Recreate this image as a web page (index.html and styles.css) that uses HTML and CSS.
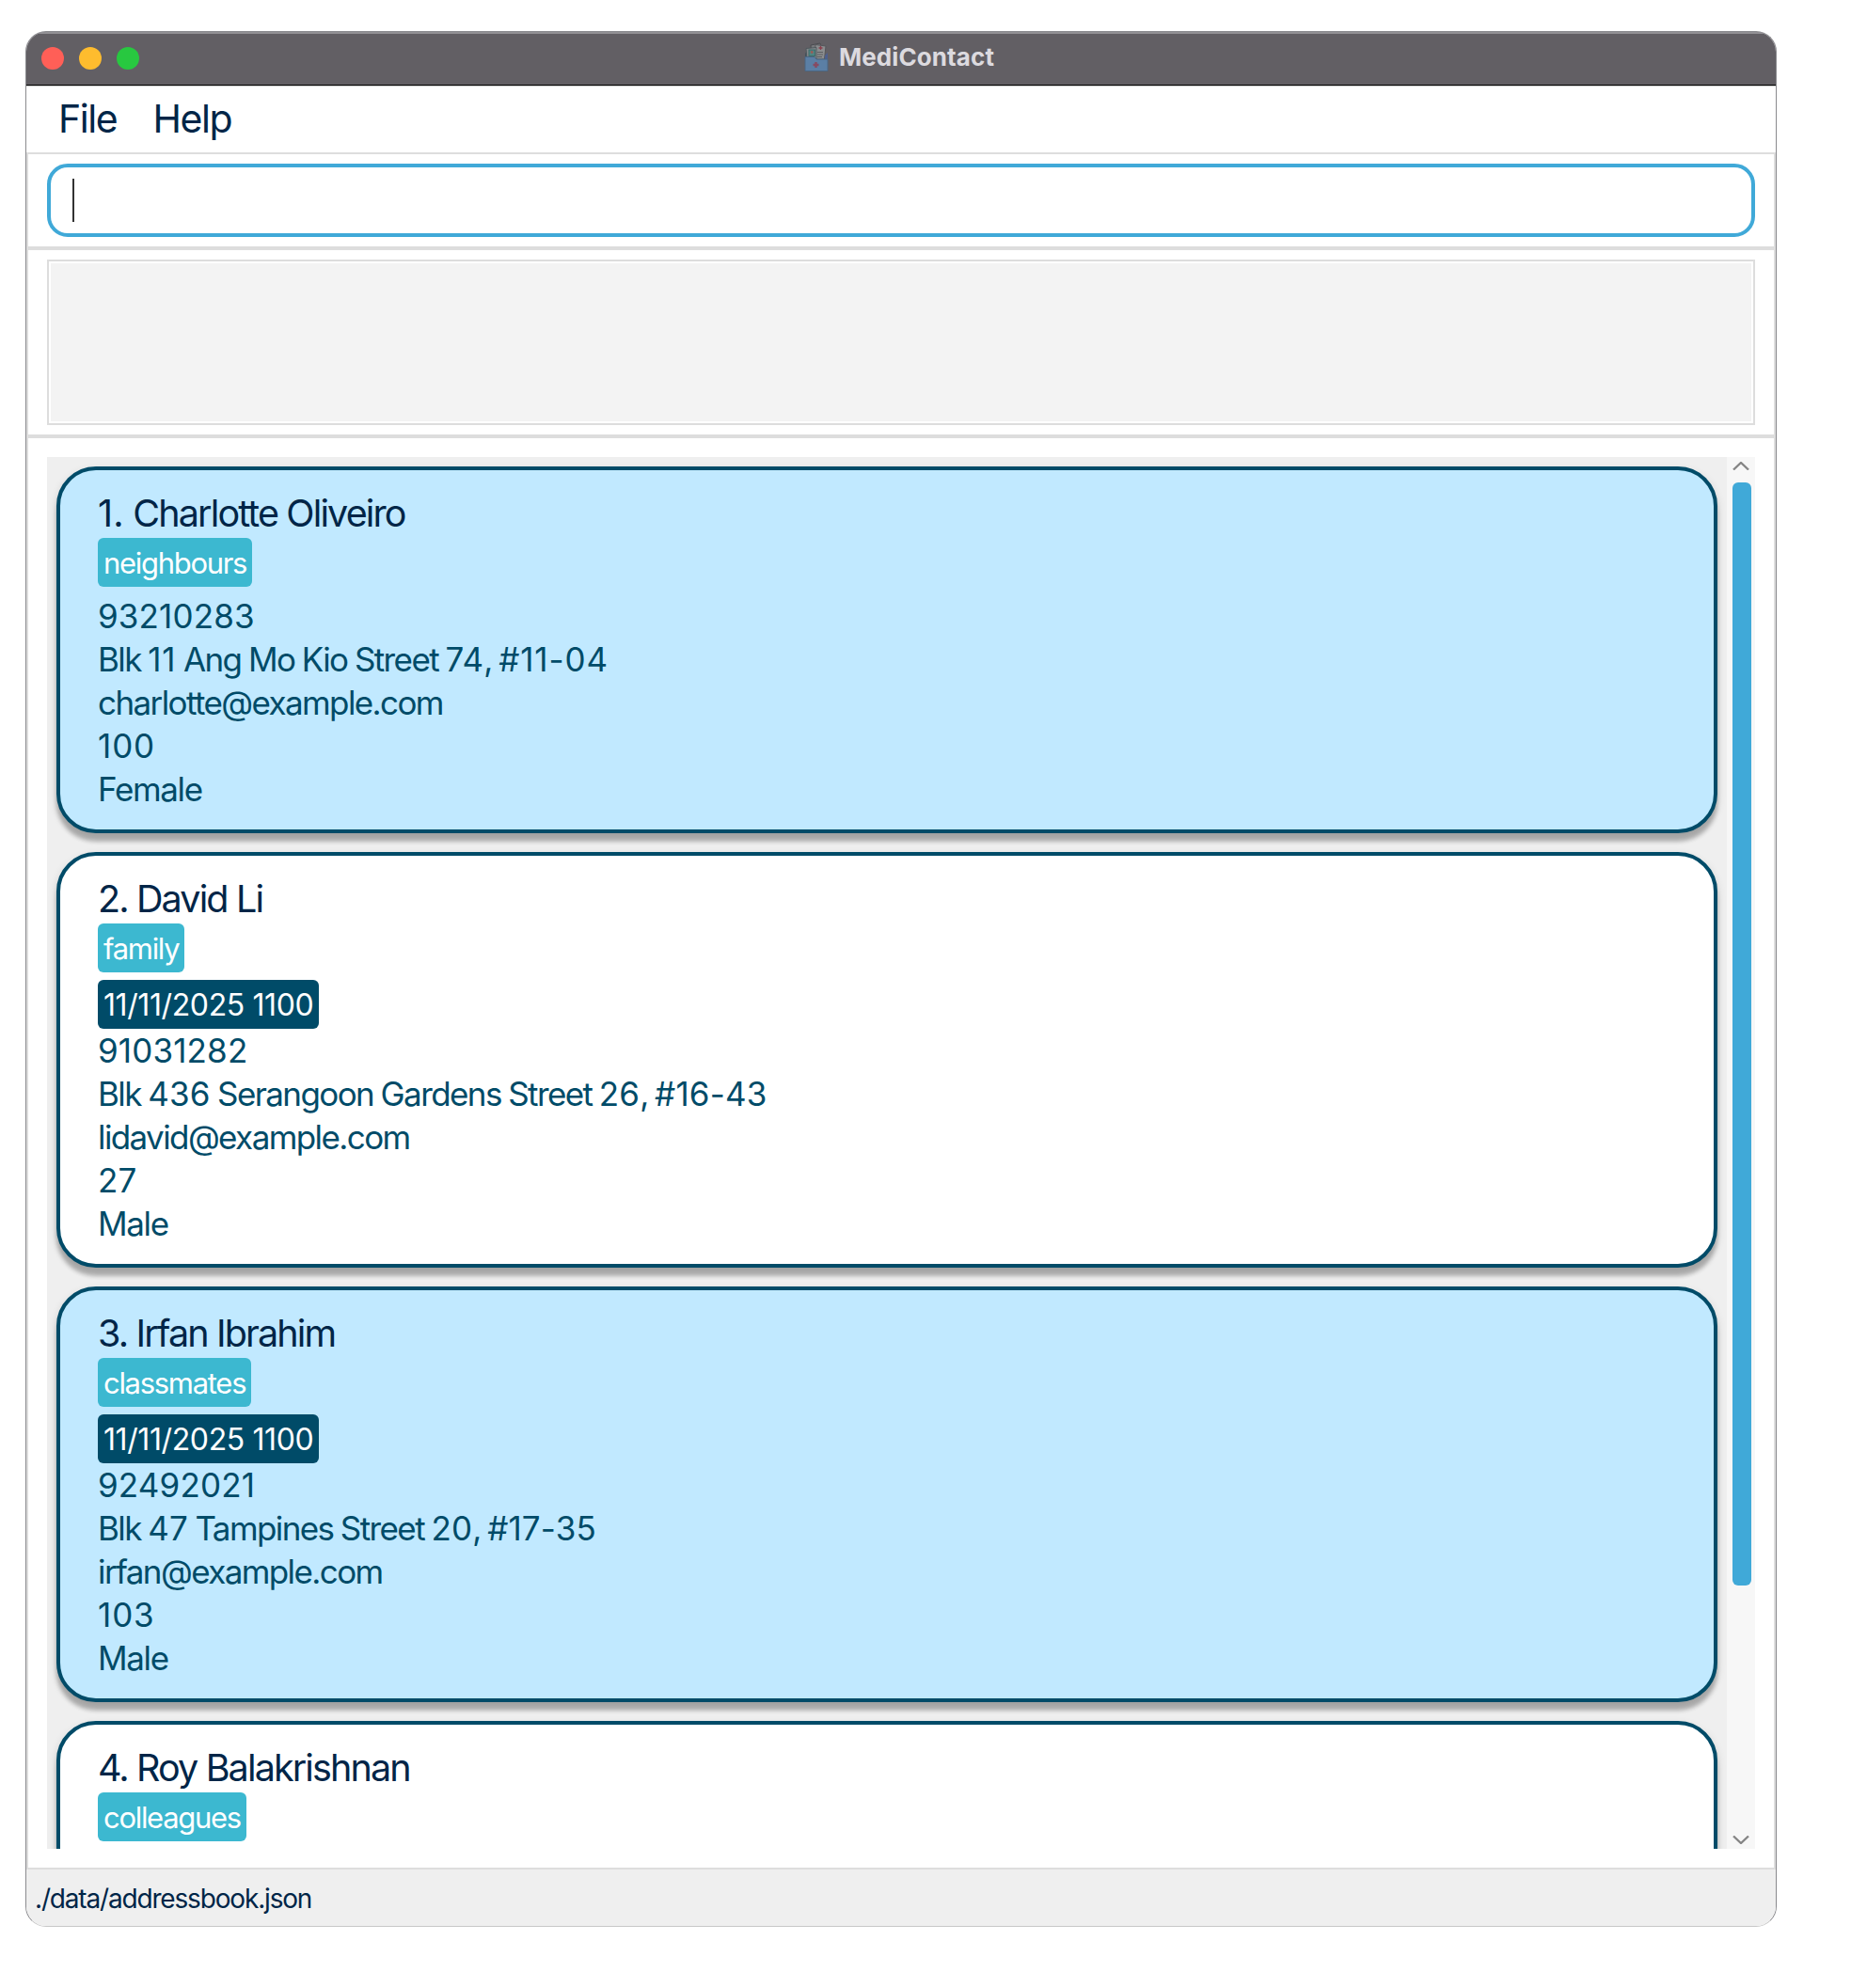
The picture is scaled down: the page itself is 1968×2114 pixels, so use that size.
FILE: index.html
```html
<!DOCTYPE html>
<html lang="en">
<head>
<meta charset="utf-8">
<title>MediContact</title>
<link rel="stylesheet" href="styles.css">
</head>
<body>
<div class="window">
  <header class="titlebar">
    <div class="lights"><i class="light close"></i><i class="light minimize"></i><i class="light zoom"></i></div>
    <div class="caption">
      <svg class="app-icon" viewBox="0 0 26 32" width="26" height="32">
        <path d="M1 12L3 9V26H1z" fill="#45515c"/>
        <path d="M7 3L17 1L20 15L8 18z" fill="#77797c" stroke="#4b4b50"/>
        <path d="M12 2.500L23 4L21.500 18H11z" fill="#8b8d8f" stroke="#55565a"/>
        <path d="M2 6.500L13 5.500V18H3z" fill="#85878a" stroke="#4e5a5e"/>
        <path d="M22 14L25 11V18H22z" fill="#4d5f8e"/>
        <rect x="5" y="8" width="6.500" height="6.500" fill="#4f8583" stroke="#3f6c6b"/>
        <circle cx="8.200" cy="10.500" r="1.400" fill="#9b5b55"/>
        <path d="M17.500 4v4M15.500 6h4" stroke="#8a3f4c" stroke-width="1.300"/>
        <path d="M14 10.500h6M14 13h6M14 15.500h5" stroke="#5c5e61"/>
        <path d="M1 15.500H11L13 18H25V30.500H1z" fill="#5b7fa5" stroke="#4a6683"/>
        <path d="M12.500 21v6M9.500 24h6" stroke="#874a62" stroke-width="2.400"/>
      </svg>
      <span>MediContact</span>
    </div>
  </header>
  <nav class="menubar"><span>File</span><span>Help</span></nav>
  <main class="content">
    <section class="command"><div class="command-field"><i class="caret"></i></div></section>
    <section class="result"><div class="result-box"></div></section>
    <section class="people">
      <div class="list">
        <article class="card tinted">
          <h2><span class="index">1.</span> Charlotte Oliveiro</h2>
          <div class="tags"><span class="tag">neighbours</span></div>
          <p class="num">93210283</p><p>Blk <span class="num ones">11</span> Ang Mo Kio Street <span class="num">74</span>, <span class="num ones">#11-04</span></p><p>charlotte@example.com</p><p class="num ones">100</p><p class="gender">Female</p>
        </article>
        <article class="card">
          <h2>2. David Li</h2>
          <div class="tags"><span class="tag">family</span></div>
          <div class="visit"><span class="tag dark">11/11/2025 1100</span></div>
          <p class="num">91031282</p><p>Blk <span class="num">436</span> Serangoon Gardens Street <span class="num">26</span>, <span class="num">#16-43</span></p><p>lidavid@example.com</p><p class="num">27</p><p class="gender">Male</p>
        </article>
        <article class="card tinted">
          <h2>3. Irfan Ibrahim</h2>
          <div class="tags"><span class="tag">classmates</span></div>
          <div class="visit"><span class="tag dark">11/11/2025 1100</span></div>
          <p class="num">92492021</p><p>Blk <span class="num">47</span> Tampines Street <span class="num">20</span>, <span class="num">#17-35</span></p><p>irfan@example.com</p><p class="num ones">103</p><p class="gender">Male</p>
        </article>
        <article class="card last">
          <h2>4. Roy Balakrishnan</h2>
          <div class="tags"><span class="tag">colleagues</span></div>
        </article>
      </div>
      <div class="scrollbar">
        <svg width="18" height="9" viewBox="0 0 18 9"><path d="M1 8.500L9 1L17 8.500" fill="none" stroke="#858585" stroke-width="2.300"/></svg>
        <div class="track"><div class="thumb"></div></div>
        <svg width="18" height="9" viewBox="0 0 18 9"><path d="M1 .5L9 8L17 .5" fill="none" stroke="#858585" stroke-width="2.300"/></svg>
      </div>
    </section>
  </main>
  <footer class="status">./data/addressbook.json</footer>
</div>
</body>
</html>
```
FILE: styles.css
```css
* { box-sizing: border-box; }
body { margin: 0; padding: 33px 0 0 27px; background: #fff; font-family: Inter, "Liberation Sans", sans-serif; color: #002547; }
.window { width: 1862px; height: 2016px; border: 1px solid #8a8a8e; border-bottom-color: #c8c8c8; border-radius: 22px; overflow: hidden; display: flex; flex-direction: column; }
.titlebar { height: 57px; flex: none; background: #625f64; border-top: 2px solid #929195; border-bottom: 1px solid #000; display: grid; grid-template-columns: 1fr auto 1fr; align-items: center; }
.lights { display: flex; gap: 16px; padding: 0 0 2px 16px; }
.light { width: 24px; height: 24px; border-radius: 50%; }
.close { background: #ff5f57; }
.minimize { background: #febc2e; }
.zoom { background: #28c840; }
.caption { display: flex; align-items: center; gap: 11px; font-size: 26px; line-height: 32px; font-weight: 700; letter-spacing: .1px; color: #dcdadf; padding: 0 4px 4px 0; }
.app-icon { display: block; }
.menubar { height: 71px; flex: none; border-top: 1px solid #ccc; display: flex; gap: 38px; padding: 0 0 0 34px; font-size: 41px; line-height: 68px; letter-spacing: -1.400px; }
.content { flex: 1; border: 2px solid #ddd; display: flex; flex-direction: column; min-height: 0; }
.command { height: 102px; flex: none; padding: 10px 20px; border-bottom: 4px solid #ddd; }
.command-field { height: 78px; border: 4px solid #40a9d8; border-radius: 22px; display: flex; align-items: center; padding-left: 23px; }
.caret { width: 2px; height: 46px; background: #333; }
.result { height: 200px; flex: none; padding: 10px 20px; border-bottom: 4px solid #ddd; }
.result-box { height: 176px; border: 2px solid #ddd; background: #f3f3f3; box-shadow: inset 0 0 0 2px #fff; }
.people { flex: 1; min-height: 0; padding: 20px; display: flex; }
.list { flex: 1; min-width: 0; overflow: hidden; background: #efefef; padding: 10px; display: flex; flex-direction: column; gap: 20px; }
.card { flex: none; border: 4px solid #004b68; border-radius: 42px; background: #fff; padding: 20px 40px; box-shadow: 0 9px 4px rgba(0,0,0,.24), 0 4px 10px rgba(0,0,0,.14); color: #004b68; }
.card.tinted { background: #c1e9ff; }
.card.last { height: 390px; }
.card h2 { margin: 0; height: 52px; font-size: 39.500px; line-height: 52px; font-weight: 400; color: #002547; letter-spacing: -1.870px; white-space: nowrap; }
.index { letter-spacing: .3px; }
.card p { margin: 0; height: 46px; font-size: 35px; line-height: 46px; letter-spacing: -1.600px; word-spacing: -.8px; white-space: nowrap; }
.card .num { letter-spacing: .15px; }
.card .ones { letter-spacing: .9px; }
.card .gender { letter-spacing: -1.350px; }
.tags { display: flex; height: 60px; }
.visit { display: flex; height: 52px; }
.tag { height: 52px; padding: 0 6px; border-radius: 6px; background: #3cb8d0; color: #fff; font-size: 31px; line-height: 53px; letter-spacing: -1.300px; white-space: nowrap; }
.tag.dark { background: #004b68; font-size: 32px; letter-spacing: -.4px; }
.scrollbar { width: 30px; background: #f7f7f7; display: flex; flex-direction: column; align-items: center; padding: 5px 0; }
.track { flex: 1; padding: 13px 0 0 2px; }
.thumb { width: 20px; height: 1173px; border-radius: 6px; background: #40a9d8; }
.status { height: 60px; flex: none; background: #efefef; padding-left: 9px; font-size: 28px; line-height: 62px; letter-spacing: -1.170px; }
```
